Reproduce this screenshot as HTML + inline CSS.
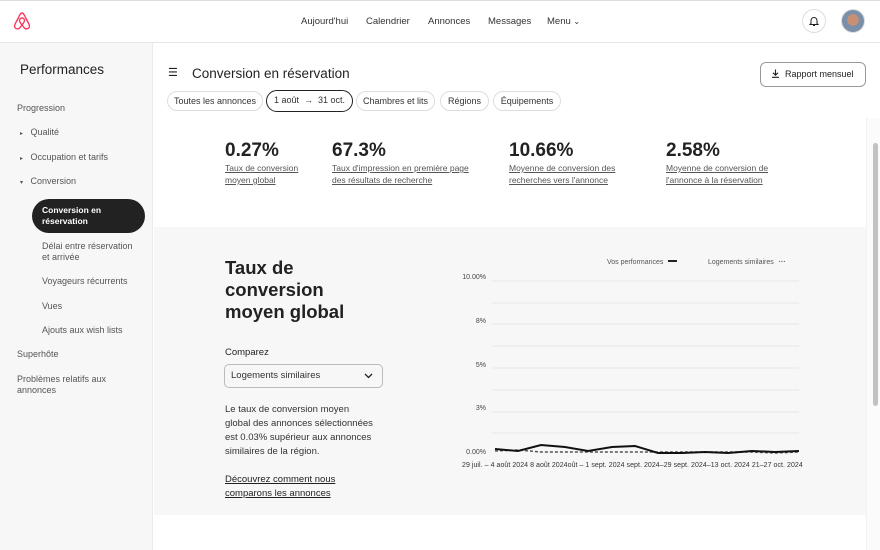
<!DOCTYPE html>
<html><head><meta charset="utf-8"><style>
*{box-sizing:border-box;margin:0;padding:0}
body{width:880px;height:550px;overflow:hidden;font-family:"Liberation Sans",sans-serif;color:#222;background:#fff;position:relative}
.a{position:absolute;white-space:nowrap}
.nav{font-size:9.5px;color:#333}
.side{font-size:9px;color:#555}
.pill{position:absolute;top:91px;height:20px;border:1px solid #ddd;border-radius:10px;font-size:9px;color:#333;line-height:18px;text-align:center}
.kpi{font-size:19px;font-weight:bold;color:#222}
.kl{font-size:8.5px;color:#555;text-decoration:underline;line-height:12px;white-space:normal}
.yl{font-size:7px;color:#444;text-align:right;width:30px}
</style></head><body>
<div class="a" style="left:0;top:0;width:880px;height:1px;background:#ddd"></div>
<div class="a" style="left:0;top:42px;width:880px;height:1px;background:#e6e6e6"></div>
<svg class="a" style="left:12px;top:11px" width="20" height="20" viewBox="0 0 20 20"><path d="M10 2C8.5 2 8 3.5 6.5 6.5S2.5 13.5 2.5 15a3 3 0 0 0 5.5 1.5L10 14l2 2.5A3 3 0 0 0 17.5 15c0-1.5-2.5-5.5-4-8.5S11.5 2 10 2zM10 14c-1.5-1.8-2.5-3.3-2.5-4.5a2.5 2.5 0 0 1 5 0c0 1.2-1 2.7-2.5 4.5z" fill="none" stroke="#ff385c" stroke-width="1.4"/></svg>
<div class="a nav" style="left:301px;top:16px">Aujourd'hui</div>
<div class="a nav" style="left:366px;top:16px">Calendrier</div>
<div class="a nav" style="left:428px;top:16px">Annonces</div>
<div class="a nav" style="left:488px;top:16px">Messages</div>
<div class="a nav" style="left:547px;top:16px">Menu <span style="font-size:8px">&#8964;</span></div>
<div class="a" style="left:802px;top:9px;width:24px;height:24px;border:1px solid #ddd;border-radius:50%"></div>
<svg class="a" style="left:808px;top:15px" width="12" height="12" viewBox="0 0 12 12"><path d="M3 8.5V5.5a3 3 0 0 1 6 0v3l1 1H2zM5 10.5h2" fill="none" stroke="#222" stroke-width="1"/></svg>
<div class="a" style="left:841px;top:9px;width:24px;height:24px;border-radius:50%;background:radial-gradient(circle at 50% 45%,#c98f72 0 35%,#7a8fa8 36% 100%);border:1px solid #ddd"></div>
<!-- sidebar -->
<div class="a" style="left:0;top:43px;width:153px;height:507px;background:#f7f7f7;border-right:1px solid #ebebeb"></div>
<div class="a" style="left:20px;top:62px;font-size:13.5px;color:#222">Performances</div>
<div class="a side" style="left:17px;top:103px">Progression</div>
<div class="a side" style="left:20px;top:127px"><span style="font-size:6px">▸</span>&nbsp;&nbsp; Qualité</div>
<div class="a side" style="left:20px;top:152px"><span style="font-size:6px">▸</span>&nbsp;&nbsp; Occupation et tarifs</div>
<div class="a side" style="left:20px;top:176px"><span style="font-size:6px">▾</span>&nbsp;&nbsp; Conversion</div>
<div class="a" style="left:32px;top:199px;width:113px;height:34px;background:#222;border-radius:17px"></div>
<div class="a" style="left:42px;top:205px;font-size:8.5px;color:#fff;font-weight:bold;line-height:11px">Conversion en<br>réservation</div>
<div class="a side" style="left:42px;top:241px;line-height:11px">Délai entre réservation<br>et arrivée</div>
<div class="a side" style="left:42px;top:276px">Voyageurs récurrents</div>
<div class="a side" style="left:42px;top:301px">Vues</div>
<div class="a side" style="left:42px;top:325px">Ajouts aux wish lists</div>
<div class="a side" style="left:17px;top:349px">Superhôte</div>
<div class="a side" style="left:17px;top:374px;line-height:11px">Problèmes relatifs aux<br>annonces</div>
<!-- header -->
<div class="a" style="left:168px;top:66px;font-size:11px">&#9776;</div>
<div class="a" style="left:192px;top:66px;font-size:13.5px;color:#222">Conversion en réservation</div>
<div class="a" style="left:760px;top:62px;width:106px;height:25px;border:1px solid #999;border-radius:6px;font-size:9px;line-height:23px;padding-left:10px">
<svg width="9" height="9" viewBox="0 0 9 9" style="vertical-align:-1px"><path d="M4.5 0.5v5.5M2 3.8l2.5 2.4 2.5-2.4M1 8.3h7" fill="none" stroke="#222" stroke-width="1.1"/></svg>&nbsp; Rapport mensuel</div>
<div class="pill" style="left:167px;width:96px">Toutes les annonces</div>
<div class="pill" style="left:266px;width:87px;border:1.5px solid #222;height:22px;top:90px;border-radius:11px;line-height:19px">1 août &nbsp;→&nbsp; 31 oct.</div>
<div class="pill" style="left:356px;width:79px">Chambres et lits</div>
<div class="pill" style="left:440px;width:49px">Régions</div>
<div class="pill" style="left:493px;width:68px">Équipements</div>
<!-- scrollbar -->
<div class="a" style="left:866px;top:118px;width:14px;height:432px;background:#fbfbfb;border-left:1px solid #f2f2f2"></div>
<div class="a" style="left:873px;top:143px;width:5px;height:263px;background:#c2c2c2;border-radius:3px"></div>
<!-- KPIs -->
<div class="a kpi" style="left:225px;top:140px">0.27%</div>
<div class="a kl" style="left:225px;top:162px;width:100px">Taux de conversion moyen global</div>
<div class="a kpi" style="left:332px;top:140px">67.3%</div>
<div class="a kl" style="left:332px;top:162px;width:150px">Taux d'impression en première page des résultats de recherche</div>
<div class="a kpi" style="left:509px;top:140px">10.66%</div>
<div class="a kl" style="left:509px;top:162px;width:120px">Moyenne de conversion des recherches vers l'annonce</div>
<div class="a kpi" style="left:666px;top:140px">2.58%</div>
<div class="a kl" style="left:666px;top:162px;width:115px">Moyenne de conversion de l'annonce à la réservation</div>
<!-- gray section -->
<div class="a" style="left:154px;top:227px;width:712px;height:288px;background:#f7f7f7"></div>
<div class="a" style="left:225px;top:257px;font-size:18.5px;font-weight:bold;line-height:22px;color:#222">Taux de<br>conversion<br>moyen global</div>
<div class="a" style="left:225px;top:347px;font-size:9.5px">Comparez</div>
<div class="a" style="left:224px;top:364px;width:159px;height:24px;border:1px solid #bbb;border-radius:5px;background:#f7f7f7;font-size:9.5px;line-height:22px;padding-left:6px;color:#333">Logements similaires<svg style="position:absolute;right:9px;top:8px" width="9" height="6" viewBox="0 0 9 6"><path d="M1 1l3.5 3.5L8 1" fill="none" stroke="#222" stroke-width="1.3"/></svg></div>
<div class="a" style="left:225px;top:403px;font-size:9.5px;line-height:14px;color:#333">Le taux de conversion moyen<br>global des annonces sélectionnées<br>est 0.03% supérieur aux annonces<br>similaires de la région.</div>
<div class="a" style="left:225px;top:473px;font-size:9.5px;line-height:14px;color:#222;text-decoration:underline">Découvrez comment nous<br>comparons les annonces</div>
<!-- chart -->
<div class="a" style="left:607px;top:259px;font-size:7px;color:#555">Vos performances <span style="display:inline-block;width:9px;height:2px;background:#222;vertical-align:2px;margin-left:3px"></span></div>
<div class="a" style="left:708px;top:259px;font-size:7px;color:#555">Logements similaires <b style="margin-left:3px">···</b></div>
<div class="a yl" style="left:456px;top:274px">10.00%</div>
<div class="a yl" style="left:456px;top:318px">8%</div>
<div class="a yl" style="left:456px;top:362px">5%</div>
<div class="a yl" style="left:456px;top:405px">3%</div>
<div class="a yl" style="left:456px;top:449px">0.00%</div>
<svg class="a" style="left:0;top:0" width="880" height="550">
<g stroke="#e2e2e2" stroke-width="0.8">
<line x1="492" x2="799" y1="281" y2="281"/><line x1="492" x2="799" y1="303" y2="303"/><line x1="492" x2="799" y1="324" y2="324"/><line x1="492" x2="799" y1="346" y2="346"/><line x1="492" x2="799" y1="368" y2="368"/><line x1="492" x2="799" y1="390" y2="390"/><line x1="492" x2="799" y1="412" y2="412"/><line x1="492" x2="799" y1="433" y2="433"/>
</g>
<polyline points="495,451 518,450 541,452 565,452 588,452 612,452 635,452 658,452 682,452 705,452 728,452 752,452 775,453 799,452" fill="none" stroke="#555" stroke-width="1.5" stroke-dasharray="3,2"/>
<polyline points="495,449 518,451 541,445 565,447 588,451 612,447 635,446 658,453 682,453 705,452 728,453 752,451 775,452 799,451" fill="none" stroke="#111" stroke-width="2"/>
</svg>
<div class="a" style="left:462px;top:462px;font-size:7px;color:#333;letter-spacing:0.05px">29 juil. – 4 août 2024 8 août 2024oût – 1 sept. 2024 sept. 2024–29 sept. 2024–13 oct. 2024 21–27 oct. 2024</div>
</body></html>
